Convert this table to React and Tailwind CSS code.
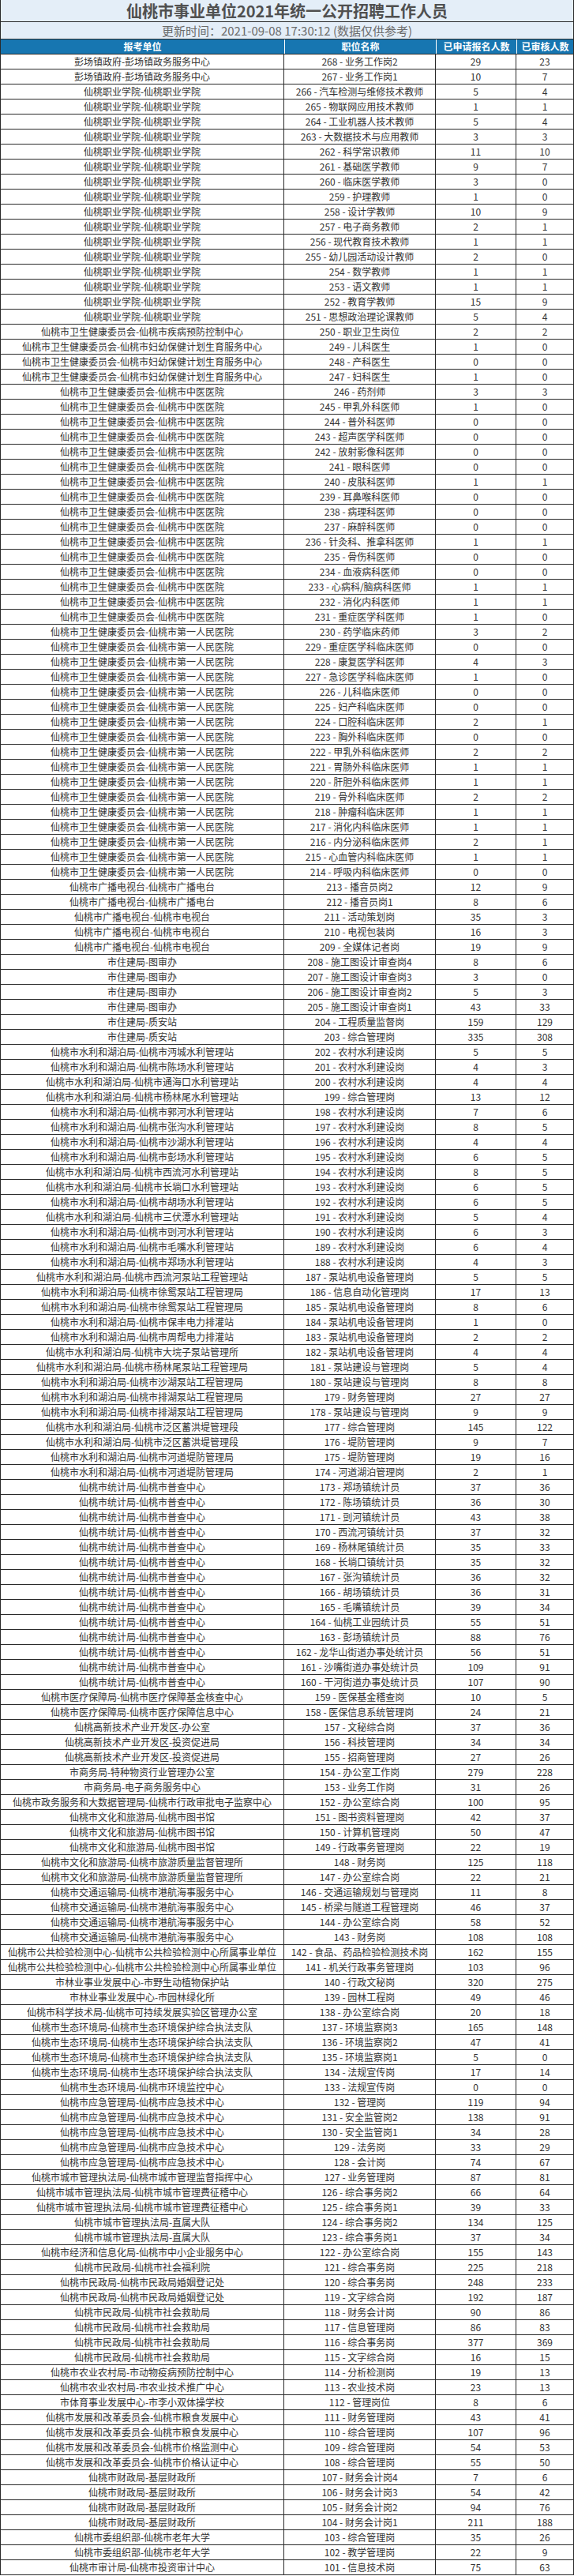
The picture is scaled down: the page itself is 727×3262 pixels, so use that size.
import React from "react";

const groups = [
  ["彭场镇政府-彭场镇政务服务中心", [["业务工作岗2", 29, 23], ["业务工作岗1", 10, 7]]],
  ["仙桃职业学院-仙桃职业学院", [
    ["汽车检测与维修技术教师", 5, 4], ["物联网应用技术教师", 1, 1], ["工业机器人技术教师", 5, 4],
    ["大数据技术与应用教师", 3, 3], ["科学常识教师", 11, 10], ["基础医学教师", 9, 7],
    ["临床医学教师", 3, 0], ["护理教师", 1, 0], ["设计学教师", 10, 9], ["电子商务教师", 2, 1],
    ["现代教育技术教师", 1, 1], ["幼儿园活动设计教师", 2, 0], ["数学教师", 1, 1], ["语文教师", 1, 1],
    ["教育学教师", 15, 9], ["思想政治理论课教师", 5, 4],
  ]],
  ["仙桃市卫生健康委员会-仙桃市疾病预防控制中心", [["职业卫生岗位", 2, 2]]],
  ["仙桃市卫生健康委员会-仙桃市妇幼保健计划生育服务中心", [["儿科医生", 1, 0], ["产科医生", 0, 0], ["妇科医生", 1, 0]]],
  ["仙桃市卫生健康委员会-仙桃市中医医院", [
    ["药剂师", 3, 3], ["甲乳外科医师", 1, 0], ["普外科医师", 0, 0], ["超声医学科医师", 0, 0],
    ["放射影像科医师", 0, 0], ["眼科医师", 0, 0], ["皮肤科医师", 1, 1], ["耳鼻喉科医师", 0, 0],
    ["病理科医师", 0, 0], ["麻醉科医师", 0, 0], ["针灸科、推拿科医师", 1, 1], ["骨伤科医师", 0, 0],
    ["血液病科医师", 0, 0], ["心病科/脑病科医师", 1, 1], ["消化内科医师", 1, 1], ["重症医学科医师", 1, 0],
  ]],
  ["仙桃市卫生健康委员会-仙桃市第一人民医院", [
    ["药学临床药师", 3, 2], ["重症医学科临床医师", 0, 0], ["康复医学科医师", 4, 3], ["急诊医学科临床医师", 1, 0],
    ["儿科临床医师", 0, 0], ["妇产科临床医师", 0, 0], ["口腔科临床医师", 2, 1], ["胸外科临床医师", 0, 0],
    ["甲乳外科临床医师", 2, 2], ["胃肠外科临床医师", 1, 1], ["肝胆外科临床医师", 1, 1], ["骨外科临床医师", 2, 2],
    ["肿瘤科临床医师", 1, 1], ["消化内科临床医师", 1, 1], ["内分泌科临床医师", 2, 1], ["心血管内科临床医师", 1, 1],
    ["呼吸内科临床医师", 0, 0],
  ]],
  ["仙桃市广播电视台-仙桃市广播电台", [["播音员岗2", 12, 9], ["播音员岗1", 8, 6]]],
  ["仙桃市广播电视台-仙桃市电视台", [["活动策划岗", 35, 3], ["电视包装岗", 16, 3], ["全媒体记者岗", 19, 9]]],
  ["市住建局-图审办", [["施工图设计审查岗4", 8, 6], ["施工图设计审查岗3", 3, 0], ["施工图设计审查岗2", 5, 3], ["施工图设计审查岗1", 43, 33]]],
  ["市住建局-质安站", [["工程质量监督岗", 159, 129], ["综合管理岗", 335, 308]]],
  ["仙桃市水利和湖泊局-仙桃市沔城水利管理站", [["农村水利建设岗", 5, 5]]],
  ["仙桃市水利和湖泊局-仙桃市陈场水利管理站", [["农村水利建设岗", 4, 3]]],
  ["仙桃市水利和湖泊局-仙桃市通海口水利管理站", [["农村水利建设岗", 4, 4]]],
  ["仙桃市水利和湖泊局-仙桃市杨林尾水利管理站", [["综合管理岗", 13, 12]]],
  ["仙桃市水利和湖泊局-仙桃市郭河水利管理站", [["农村水利建设岗", 7, 6]]],
  ["仙桃市水利和湖泊局-仙桃市张沟水利管理站", [["农村水利建设岗", 8, 5]]],
  ["仙桃市水利和湖泊局-仙桃市沙湖水利管理站", [["农村水利建设岗", 4, 4]]],
  ["仙桃市水利和湖泊局-仙桃市彭场水利管理站", [["农村水利建设岗", 6, 5]]],
  ["仙桃市水利和湖泊局-仙桃市西流河水利管理站", [["农村水利建设岗", 8, 5]]],
  ["仙桃市水利和湖泊局-仙桃市长埫口水利管理站", [["农村水利建设岗", 6, 5]]],
  ["仙桃市水利和湖泊局-仙桃市胡场水利管理站", [["农村水利建设岗", 6, 5]]],
  ["仙桃市水利和湖泊局-仙桃市三伏潭水利管理站", [["农村水利建设岗", 5, 4]]],
  ["仙桃市水利和湖泊局-仙桃市剅河水利管理站", [["农村水利建设岗", 6, 3]]],
  ["仙桃市水利和湖泊局-仙桃市毛嘴水利管理站", [["农村水利建设岗", 6, 4]]],
  ["仙桃市水利和湖泊局-仙桃市郑场水利管理站", [["农村水利建设岗", 4, 3]]],
  ["仙桃市水利和湖泊局-仙桃市西流河泵站工程管理站", [["泵站机电设备管理岗", 5, 5]]],
  ["仙桃市水利和湖泊局-仙桃市徐鸳泵站工程管理局", [["信息自动化管理岗", 17, 13], ["泵站机电设备管理岗", 8, 6]]],
  ["仙桃市水利和湖泊局-仙桃市保丰电力排灌站", [["泵站机电设备管理岗", 1, 0]]],
  ["仙桃市水利和湖泊局-仙桃市周帮电力排灌站", [["泵站机电设备管理岗", 2, 2]]],
  ["仙桃市水利和湖泊局-仙桃市大垸子泵站管理所", [["泵站机电设备管理岗", 4, 4]]],
  ["仙桃市水利和湖泊局-仙桃市杨林尾泵站工程管理局", [["泵站建设与管理岗", 5, 4]]],
  ["仙桃市水利和湖泊局-仙桃市沙湖泵站工程管理局", [["泵站建设与管理岗", 8, 8]]],
  ["仙桃市水利和湖泊局-仙桃市排湖泵站工程管理局", [["财务管理岗", 27, 27], ["泵站建设与管理岗", 9, 9]]],
  ["仙桃市水利和湖泊局-仙桃市泛区蓄洪堤管理段", [["综合管理岗", 145, 122], ["堤防管理岗", 9, 7]]],
  ["仙桃市水利和湖泊局-仙桃市河道堤防管理局", [["堤防管理岗", 19, 16], ["河道湖泊管理岗", 2, 1]]],
  ["仙桃市统计局-仙桃市普查中心", [
    ["郑场镇统计员", 37, 36], ["陈场镇统计员", 36, 30], ["剅河镇统计员", 43, 38], ["西流河镇统计员", 37, 32],
    ["杨林尾镇统计员", 35, 33], ["长埫口镇统计员", 35, 32], ["张沟镇统计员", 36, 32], ["胡场镇统计员", 36, 31],
    ["毛嘴镇统计员", 39, 34], ["仙桃工业园统计员", 55, 51], ["彭场镇统计员", 88, 76], ["龙华山街道办事处统计员", 56, 51],
    ["沙嘴街道办事处统计员", 109, 91], ["干河街道办事处统计员", 107, 90],
  ]],
  ["仙桃市医疗保障局-仙桃市医疗保障基金核查中心", [["医保基金稽查岗", 10, 5]]],
  ["仙桃市医疗保障局-仙桃市医疗保障信息中心", [["医保信息系统管理岗", 24, 21]]],
  ["仙桃高新技术产业开发区-办公室", [["文秘综合岗", 37, 36]]],
  ["仙桃高新技术产业开发区-投资促进局", [["科技管理岗", 34, 34], ["招商管理岗", 27, 26]]],
  ["市商务局-特种物资行业管理办公室", [["办公室工作岗", 279, 228]]],
  ["市商务局-电子商务服务中心", [["业务工作岗", 31, 26]]],
  ["仙桃市政务服务和大数据管理局-仙桃市行政审批电子监察中心", [["办公室综合岗", 100, 95]]],
  ["仙桃市文化和旅游局-仙桃市图书馆", [["图书资料管理岗", 42, 37], ["计算机管理岗", 50, 47], ["行政事务管理岗", 22, 19]]],
  ["仙桃市文化和旅游局-仙桃市旅游质量监督管理所", [["财务岗", 125, 118], ["办公室综合岗", 22, 21]]],
  ["仙桃市交通运输局-仙桃市港航海事服务中心", [
    ["交通运输规划与管理岗", 11, 8], ["桥梁与隧道工程管理岗", 46, 37], ["办公室综合岗", 58, 52], ["财务岗", 108, 108],
  ]],
  ["仙桃市公共检验检测中心-仙桃市公共检验检测中心所属事业单位", [["食品、药品检验检测技术岗", 162, 155], ["机关行政事务管理岗", 103, 96]]],
  ["市林业事业发展中心-市野生动植物保护站", [["行政文秘岗", 320, 275]]],
  ["市林业事业发展中心-市园林绿化所", [["园林工程岗", 49, 46]]],
  ["仙桃市科学技术局-仙桃市可持续发展实验区管理办公室", [["办公室综合岗", 20, 18]]],
  ["仙桃市生态环境局-仙桃市生态环境保护综合执法支队", [
    ["环境监察岗3", 165, 148], ["环境监察岗2", 47, 41], ["环境监察岗1", 5, 0], ["法规宣传岗", 17, 14],
  ]],
  ["仙桃市生态环境局-仙桃市环境监控中心", [["法规宣传岗", 0, 0]]],
  ["仙桃市应急管理局-仙桃市应急技术中心", [
    ["管理岗", 119, 94], ["安全监管岗2", 138, 91], ["安全监管岗1", 34, 28], ["法务岗", 33, 29], ["会计岗", 74, 67],
  ]],
  ["仙桃市城市管理执法局-仙桃市城市管理监督指挥中心", [["业务管理岗", 87, 81]]],
  ["仙桃市城市管理执法局-仙桃市城市管理费征稽中心", [["综合事务岗2", 66, 64], ["综合事务岗1", 39, 33]]],
  ["仙桃市城市管理执法局-直属大队", [["综合事务岗2", 134, 125], ["综合事务岗1", 37, 34]]],
  ["仙桃市经济和信息化局-仙桃市中小企业服务中心", [["办公室综合岗", 155, 143]]],
  ["仙桃市民政局-仙桃市社会福利院", [["综合事务岗", 225, 218]]],
  ["仙桃市民政局-仙桃市民政局婚姻登记处", [["综合事务岗", 248, 233], ["文字综合岗", 192, 187]]],
  ["仙桃市民政局-仙桃市社会救助局", [["财务会计岗", 90, 86], ["信息管理岗", 86, 83], ["综合事务岗", 377, 369], ["文字综合岗", 16, 15]]],
  ["仙桃市农业农村局-市动物疫病预防控制中心", [["分析检测岗", 19, 13]]],
  ["仙桃市农业农村局-市农业技术推广中心", [["农业技术岗", 23, 13]]],
  ["市体育事业发展中心-市李小双体操学校", [["管理岗位", 8, 6]]],
  ["仙桃市发展和改革委员会-仙桃市粮食发展中心", [["财务管理岗", 43, 41], ["综合管理岗", 107, 96]]],
  ["仙桃市发展和改革委员会-仙桃市价格监测中心", [["综合管理岗", 54, 53]]],
  ["仙桃市发展和改革委员会-仙桃市价格认证中心", [["综合管理岗", 55, 50]]],
  ["仙桃市财政局-基层财政所", [["财务会计岗4", 7, 6], ["财务会计岗3", 54, 42], ["财务会计岗2", 94, 76], ["财务会计岗1", 211, 188]]],
  ["仙桃市委组织部-仙桃市老年大学", [["综合管理岗", 35, 26], ["教学管理岗", 22, 9]]],
  ["仙桃市审计局-仙桃市投资审计中心", [["信息技术岗", 75, 63]]],
];

// flatten, codes count down from 268
const rows = [];
let code = 268;
groups.forEach(([unit, posts]) => {
  posts.forEach(([post, applied, passed]) => {
    rows.push({ code, unit, post: `${code} - ${post}`, applied, passed });
    code--;
  });
});

const Row = ({ row }) => (
  <div className="grid grid-cols-[360px_192px_102px_73px] h-[19px] border-b border-[#2a2a2a] text-[12px] leading-none text-[#333] whitespace-nowrap">
    <div className="flex items-center justify-center border-l border-r border-[#2a2a2a]">{row.unit}</div>
    <div className="flex items-center justify-center border-r border-[#2a2a2a]">{row.post}</div>
    <div className="flex items-center justify-center border-r border-[#2a2a2a]">{row.applied}</div>
    <div className="flex items-center justify-center border-r border-[#2a2a2a]">{row.passed}</div>
  </div>
);

export default function App() {
  return (
    <div className="w-[727px] bg-white font-['Noto_Sans_CJK_SC',sans-serif]">
      <div className="h-[28px] flex items-center justify-center bg-[#e4eef8] border-l border-r border-b border-[#2a2a2a] text-[20px] font-bold text-[#505050] leading-none">
        仙桃市事业单位2021年统一公开招聘工作人员
      </div>
      <div className="h-[22px] flex items-center justify-center bg-[#e4eef8] border-l border-r border-b border-[#2a2a2a] text-[15px] text-[#6b6b6b] leading-none">
        更新时间：2021-09-08 17:30:12 (数据仅供参考)
      </div>
      <div className="grid grid-cols-[360px_192px_102px_73px] h-[19px] bg-[#1776b1] text-white text-[12px] font-bold leading-none border-b border-[#2a2a2a]">
        <div className="flex items-center justify-center border-l border-[#2a2a2a] border-r-white">报考单位</div>
        <div className="flex items-center justify-center border-l border-white">职位名称</div>
        <div className="flex items-center justify-center border-l border-white">已申请报名人数</div>
        <div className="flex items-center justify-center border-l border-r border-l-white border-r-[#2a2a2a]">已审核人数</div>
      </div>
      {rows.map(row => <Row row={row} key={row.code} />)}
    </div>
  );
}
